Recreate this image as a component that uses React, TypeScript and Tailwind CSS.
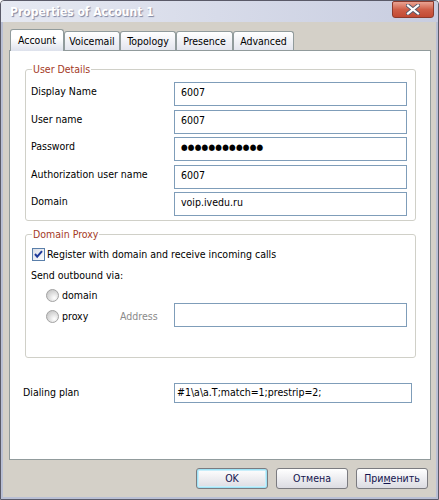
import React from 'react';

const font = "font-['DejaVu_Sans_Condensed','DejaVu_Sans',sans-serif]";

const tabs = [
  { label: 'Account', width: 'w-[54px]', active: true },
  { label: 'Voicemail', width: 'w-[56px]', active: false },
  { label: 'Topology', width: 'w-[56px]', active: false },
  { label: 'Presence', width: 'w-[57px]', active: false },
  { label: 'Advanced', width: 'w-[61px]', active: false },
];

const details = [
  { label: 'Display Name', value: '6007', gap: '' },
  { label: 'User name', value: '6007', gap: 'mt-[4px]' },
  { label: 'Password', value: null, gap: 'mt-[3px]' },
  { label: 'Authorization user name', value: '6007', gap: 'mt-[4px]' },
  { label: 'Domain', value: 'voip.ivedu.ru', gap: 'mt-[3px]' },
];

const CloseButton = () => (
  <button className="w-[42px] h-[17px] mr-[4px] rounded-b-[3px] rounded-tl-[2px] border border-[#8c3a2c] bg-linear-to-b from-[#e9a393] via-[#cf5f48] to-[#c24a33] flex items-center justify-center">
    <svg width="14" height="11" viewBox="0 0 14 11">
      <path d="M2 1.5 L12 9.5 M12 1.5 L2 9.5" stroke="#55586a" strokeWidth="4" strokeLinecap="square" />
      <path d="M2 1.5 L12 9.5 M12 1.5 L2 9.5" stroke="#ffffff" strokeWidth="2.2" strokeLinecap="square" />
    </svg>
  </button>
);

const TitleBar = () => (
  <div className="h-[21px] shrink-0 flex items-start justify-between pl-[9px] bg-linear-to-r from-[#e6e9f2] to-[#c8cde0]">
    <span className="text-[12px] leading-[22px] font-bold text-white [text-shadow:1px_1px_1px_#7d84a0]">
      Properties of Account 1
    </span>
    <CloseButton />
  </div>
);

const Tabs = () => (
  <div className="h-[21px] flex items-end pl-[1px] relative z-10">
    {tabs.map((t) =>
      t.active ? (
        <div
          key={t.label}
          className={`${t.width} h-[22px] -mb-[1px] border border-b-0 border-[#919b9c] rounded-t-[3px] bg-linear-to-b from-white from-40% to-[#dde1ec] flex justify-center pt-[4px]`}
        >
          {t.label}
        </div>
      ) : (
        <div
          key={t.label}
          className={`${t.width} h-[19px] border border-b-0 border-[#919b9c] rounded-t-[3px] bg-linear-to-b from-white to-[#e3e5ee] flex justify-center pt-[3px]`}
        >
          {t.label}
        </div>
      )
    )}
  </div>
);

const Field = ({ children, className }: { children?: React.ReactNode; className: string }) => (
  <div className={`border border-[#7f9db9] bg-white whitespace-nowrap ${className}`}>{children}</div>
);

const CheckBox = () => (
  <svg width="13" height="13" viewBox="0 0 13 13" className="shrink-0">
    <defs>
      <linearGradient id="cbFill" x1="0" y1="0" x2="1" y2="1">
        <stop offset="0" stopColor="#d8dce6" />
        <stop offset="1" stopColor="#ffffff" />
      </linearGradient>
    </defs>
    <rect x="0.5" y="0.5" width="12" height="12" fill="url(#cbFill)" stroke="#5a7faa" />
    <path d="M3 6 L5.2 8.6 L10 3.2" fill="none" stroke="#1f3a9a" strokeWidth="2" />
  </svg>
);

const Radio = () => (
  <svg width="13" height="13" viewBox="0 0 13 13" className="shrink-0">
    <defs>
      <radialGradient id="rdFill" cx="0.65" cy="0.7" r="0.7">
        <stop offset="0" stopColor="#ffffff" />
        <stop offset="1" stopColor="#c9c9c9" />
      </radialGradient>
    </defs>
    <circle cx="6.5" cy="6.5" r="6" fill="url(#rdFill)" stroke="#a3a3a3" />
  </svg>
);

const GroupBox = ({ title, className, children }: { title: string; className: string; children: React.ReactNode }) => (
  <fieldset className={`border border-[#d0d0c8] rounded-[3px] ml-[15px] mr-[14px] pl-[5px] pr-[8px] ${className}`}>
    <legend className="ml-[1px] px-[1px] h-[14px] leading-[14px] text-[#a43a1f]">{title}</legend>
    {children}
  </fieldset>
);

const Panel = () => (
  <div className="h-[410px] shrink-0 border border-[#919b9c] bg-white flex flex-col">
    <GroupBox title="User Details" className="mt-[11px] pt-[6px] pb-[4px]">
      {details.map((d) => (
        <div key={d.label} className={`flex items-start ${d.gap}`}>
          <span className="flex-1 pt-[3px]">{d.label}</span>
          <Field className="w-[233px] h-[24px] pl-[6px] pt-[3px]">
            {d.value ?? (
              <span className="text-[8.5px] tracking-[0.2px] leading-[16px] relative -top-[2px]">●●●●●●●●●●●●</span>
            )}
          </Field>
        </div>
      ))}
    </GroupBox>

    <GroupBox title="Domain Proxy" className="mt-[6px] pt-[7px] pb-[30px]">
      <label className="flex items-center gap-[2px] ml-[1px] h-[13px]">
        <CheckBox />
        <span>Register with domain and receive incoming calls</span>
      </label>
      <div className="mt-[8px]">Send outbound via:</div>
      <label className="flex items-center gap-[3px] ml-[15px] mt-[7px] h-[13px]">
        <Radio />
        <span>domain</span>
      </label>
      <div className="flex items-start ml-[15px] mt-[1px]">
        <label className="w-[74px] flex items-center gap-[3px] mt-[7px] h-[13px]">
          <Radio />
          <span>proxy</span>
        </label>
        <span className="w-[54px] pt-[7px] text-[#8a8a8a]">Address</span>
        <Field className="w-[233px] h-[24px]" />
      </div>
    </GroupBox>

    <div className="flex items-start mt-[25px] pl-[13px]">
      <span className="w-[151px] pt-[3px]">Dialing plan</span>
      <Field className="w-[238px] h-[20px] pl-[2px] pt-[2px]">{'#1\\a\\a.T;match=1;prestrip=2;'}</Field>
    </div>
  </div>
);

const DialogButton = ({ children, focused }: { children: React.ReactNode; focused?: boolean }) => (
  <button
    className={`w-[72px] h-[21px] rounded-[3px] border border-[#7b7b80] bg-linear-to-b from-white to-[#dcdce2] text-[#14144e] flex items-center justify-center ${
      focused ? 'shadow-[inset_0_0_0_1px_#9fe3f6,inset_0_0_0_2px_#c8eefa]' : ''
    }`}
  >
    {children}
  </button>
);

const Buttons = () => (
  <div className="flex justify-end gap-[8px] mt-[8px] mr-[3px]">
    <DialogButton focused>OK</DialogButton>
    <DialogButton>Отмена</DialogButton>
    <DialogButton>
      При<span className="underline">м</span>енить
    </DialogButton>
  </div>
);

export default function App() {
  return (
    <div
      className={`w-[439px] h-[500px] flex flex-col border border-[#5a5a68] rounded-t-[4px] overflow-hidden bg-[#d4d0c8] text-[10.5px] leading-[13px] text-black ${font}`}
    >
      <TitleBar />
      <div className="flex-1 flex flex-col border-x-2 border-b-2 border-[#b9bfd4] pl-[6px] pr-[5px] pt-[7px] pb-[8px]">
        <Tabs />
        <Panel />
        <Buttons />
      </div>
    </div>
  );
}
